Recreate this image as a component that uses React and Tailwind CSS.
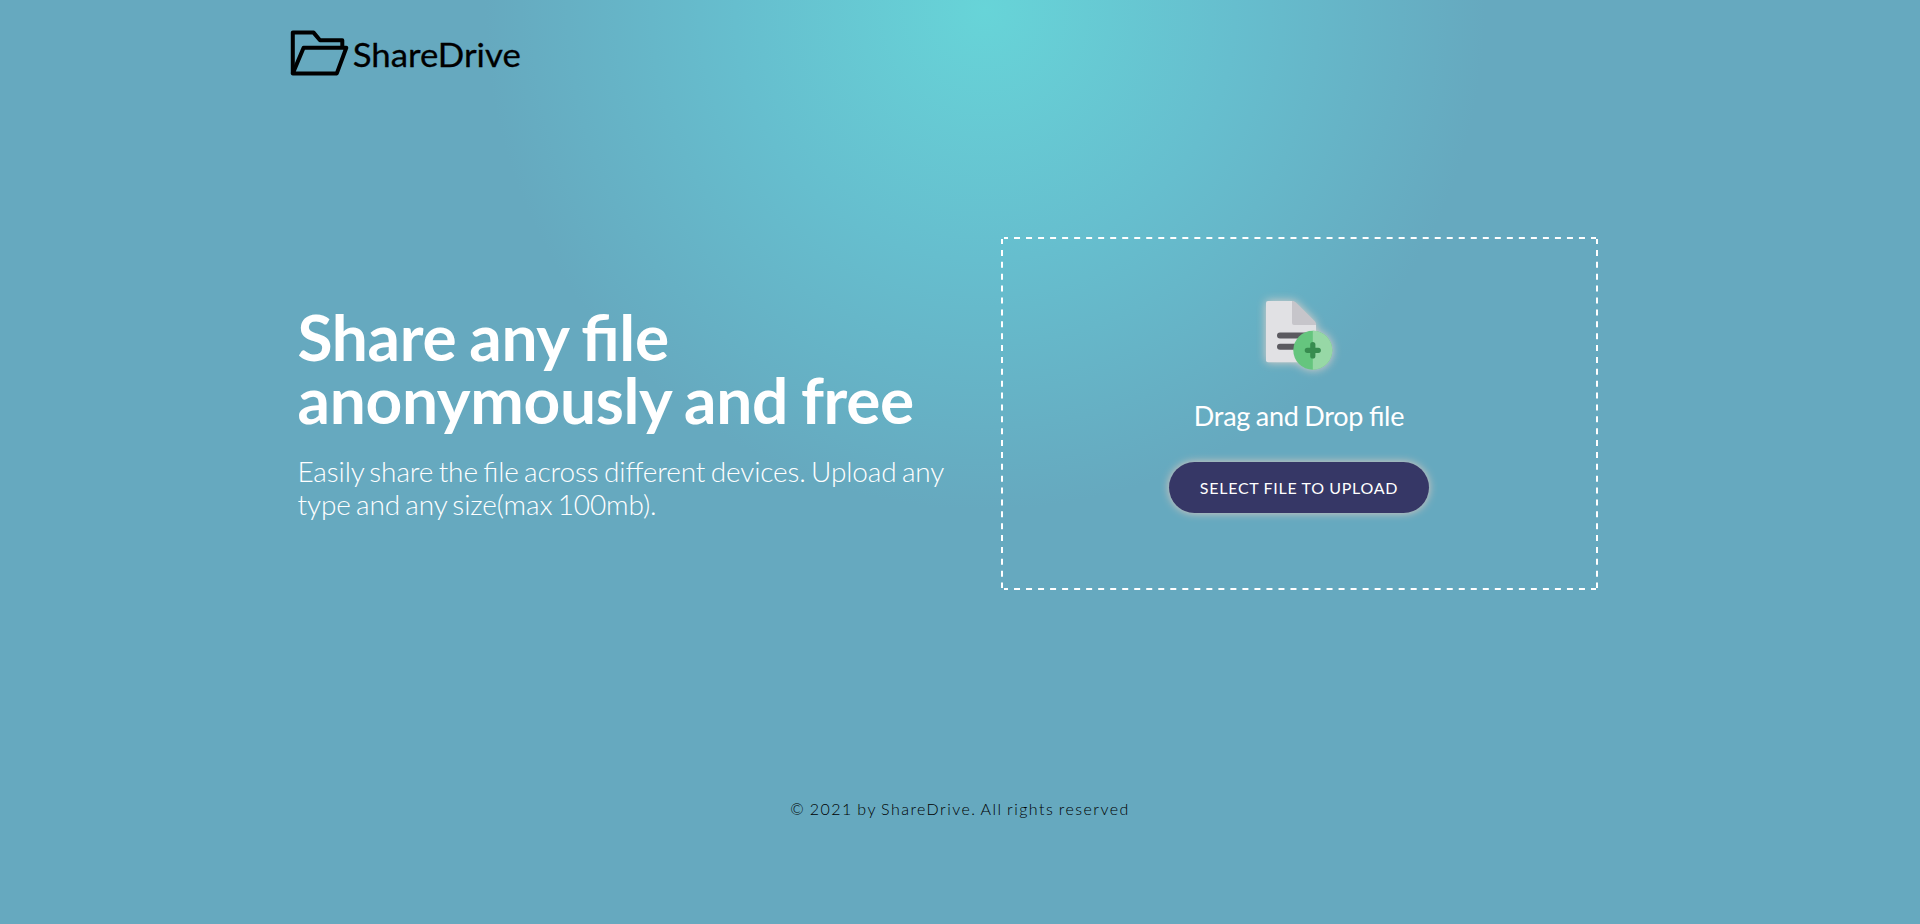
function Logo() {
  return (
    <svg width="236" height="50" viewBox="0 0 236 50" role="img" aria-label="ShareDrive">
      <g fill="none" stroke="#000" strokeWidth="4" strokeLinejoin="round">
        <path d="M2.8 43.4V2.6H23.6L30 10.2H52.3V17.5" />
        <path d="M2.8 43.4L13.6 17.8H56.3L46.8 43.4Z" />
      </g>
      <text x="62.8" y="37" textLength="168" lengthAdjust="spacingAndGlyphs" stroke="#000" strokeWidth="0.3" className="font-['Lato',sans-serif] text-[33.5px] font-normal">ShareDrive</text>
    </svg>
  );
}

function FileIcon() {
  return (
    <svg width="68" height="70" viewBox="0 0 68 70" className="drop-shadow-[0_0_5px_#e0d0c8]">
      <path d="M2 0H27L50 23V59.2a2 2 0 0 1-2 2H2a2 2 0 0 1-2-2V2a2 2 0 0 1 2-2Z" fill="#e1e1e4" />
      <path d="M26 0C27.8 0 29 .5 30.2 1.7L48.6 20C49.7 21.1 50 22 50 24H28a2 2 0 0 1-2-2Z" fill="#c6c5ca" />
      <path d="M14 34.4H40M14 45.8H40" stroke="#5b5a60" strokeWidth="6" strokeLinecap="round" />
      <circle cx="46.8" cy="49.3" r="19.5" fill="#65c57e" />
      <path d="M46.8 29.8a19.5 19.5 0 0 1 0 39Z" fill="#97d8a6" />
      <path d="M46.8 43.6V55M41.3 49.3H52.3" stroke="#378c4f" strokeWidth="5.2" strokeLinecap="round" />
    </svg>
  );
}

function DashedOutline() {
  return (
    <svg className="pointer-events-none absolute inset-0" width="597" height="353" fill="none" stroke="#fff" strokeWidth="2" aria-hidden="true">
      <path d="M3 1H595M3 352H595" strokeDasharray="6 6.02" strokeDashoffset="2" />
      <path d="M1 2V351M596 2V351" strokeDasharray="6 5.88" strokeDashoffset="0.9" />
    </svg>
  );
}

export default function App() {
  return (
    <div className="flex h-[924px] flex-col bg-[#66a9bf] bg-[radial-gradient(circle_500px_at_985px_10px,#67d4d8,#66bece_50%,#66a9bf)] font-['Lato',sans-serif] text-white [font-feature-settings:'liga'_1]">
      <header className="h-[80px] pt-[30px] pl-[290px]">
        <Logo />
      </header>
      <main className="mt-[157px] flex h-[353px] pl-[297.5px]">
        <section className="w-[703.5px] pt-[68px]">
          <h1 className="w-[640px] text-[64px] leading-[63px] font-bold tracking-[-0.32px] [word-spacing:-2.2px]">Share any file anonymously and free</h1>
          <p className="mt-[24px] w-[660px] text-[28px] leading-[33px] font-light tracking-[-0.11px] [word-spacing:-2.2px]">Easily share the file across different devices. Upload any type and any size(max 100mb).</p>
        </section>
        <section className="relative flex h-[353px] w-[597px] flex-col items-center pr-px">
          <DashedOutline />
          <div className="mt-[64px] ml-[2px] flex h-[70px]">
            <FileIcon />
          </div>
          <p className="mt-[28px] text-[27px] leading-[34px] tracking-[-0.25px] [word-spacing:-1px]">Drag and Drop file</p>
          <button className="mt-[29px] h-[51px] w-[260px] rounded-[26px] bg-[#363766] text-base font-normal tracking-[0.75px] shadow-[0_0_8px_#e0c8bc] [word-spacing:-0.4px]">SELECT FILE TO UPLOAD</button>
        </section>
      </main>
      <footer className="mt-[207px] text-center text-base leading-6 font-light tracking-[1.46px] text-black [word-spacing:-1.2px]">© 2021 by ShareDrive. All rights reserved</footer>
    </div>
  );
}
